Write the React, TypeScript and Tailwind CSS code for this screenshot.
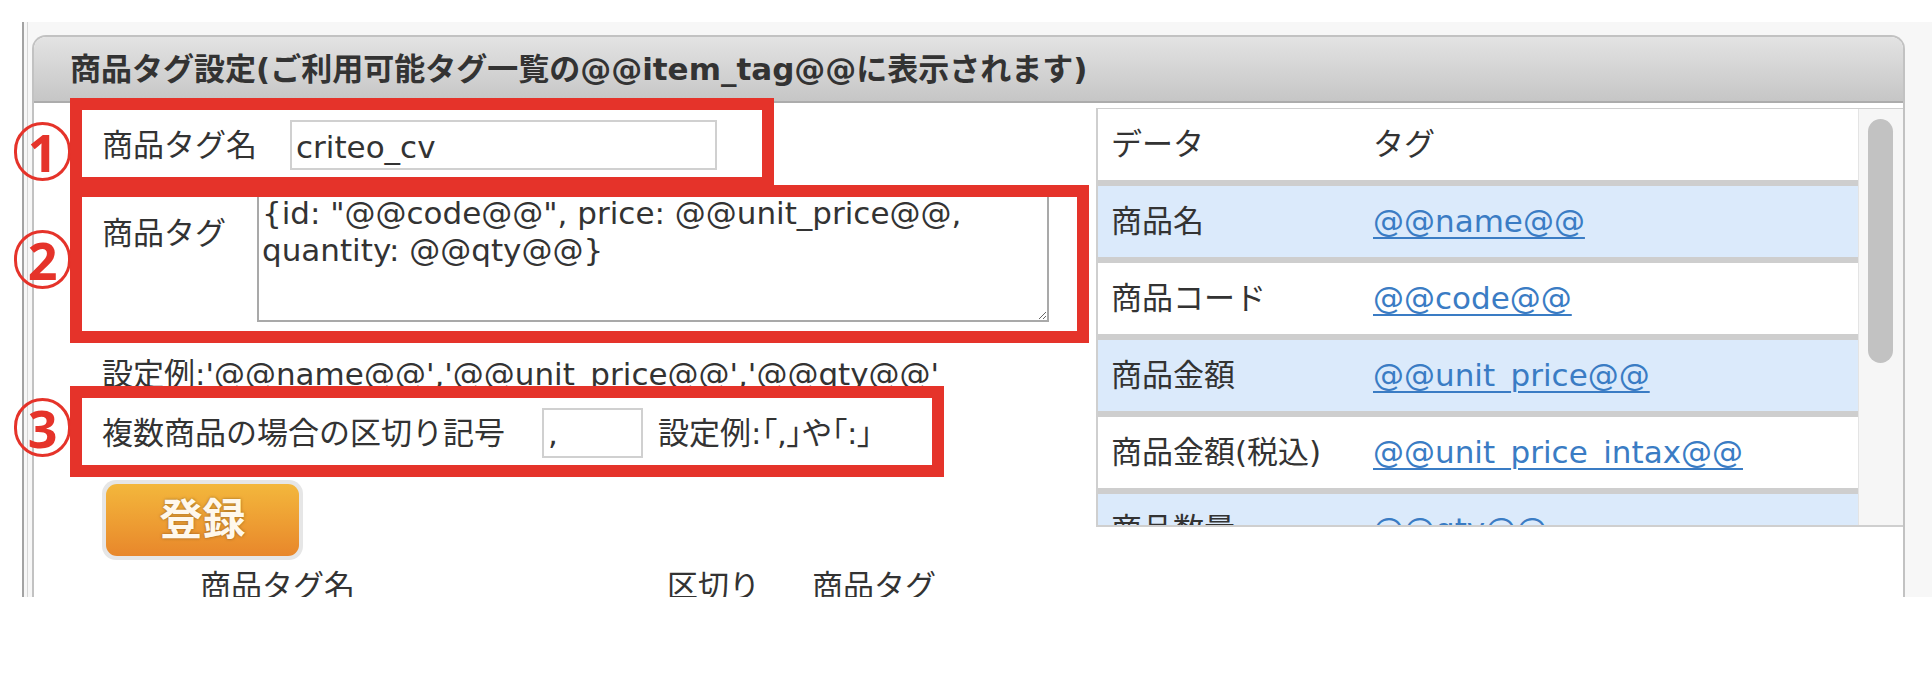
import React from "react";

const tagRows = [
  { label: "商品名", tag: "@@name@@" },
  { label: "商品コード", tag: "@@code@@" },
  { label: "商品金額", tag: "@@unit_price@@" },
  { label: "商品金額(税込)", tag: "@@unit_price_intax@@" },
  { label: "商品数量", tag: "@@qty@@" },
];

function Circled({ n, className }: { n: string; className: string }) {
  return (
    <div
      className={
        "absolute left-[14px] w-[57px] h-[59px] rounded-full border-[3px] border-[#e5332a] flex items-center justify-center text-[#e5332a] font-bold text-[52px] leading-none font-['Noto_Sans',sans-serif] " +
        className
      }
    >
      {n}
    </div>
  );
}

export default function App() {
  return (
    <div className="relative w-[1932px] h-[686px] overflow-hidden bg-white text-[#333] text-[31px] font-['DejaVu_Sans','Noto_Sans_CJK_JP',sans-serif]">
      <div className="pt-[22px] pl-[22px]">
        <div className="h-[575px] overflow-hidden bg-[#f7f7f7] border-l-2 border-[#a3a3a3]">
          <div className="h-full ml-[3px] border-l border-[#d6d6d6] pl-[4px] pt-[13px]">
            {/* panel */}
            <div className="w-[1873px] rounded-t-[14px] border-x-2 border-t-2 border-[#c2c2c2] bg-white">
              <div className="h-[66px] rounded-t-[12px] border-b-2 border-[#acacac] bg-gradient-to-b from-[#e3e3e3] to-[#c6c6c6] flex items-center pl-[36px] font-bold text-[31px] text-[#333]">
                商品タグ設定(ご利用可能タグ一覧の@@item_tag@@に表示されます)
              </div>

              <div className="flex">
                {/* form column */}
                <div className="w-[1062px] pl-[68px] pt-[17px] leading-[40px]">
                  <div className="flex items-center h-[50px]">
                    <div className="w-[188px]">商品タグ名</div>
                    <input
                      readOnly
                      value="criteo_cv"
                      className="w-[427px] h-[50px] border-2 border-[#d0d0d0] bg-white px-[4px] pt-[3px] text-[31px] outline-none"
                    />
                  </div>

                  <div className="flex items-start mt-[18px]">
                    <div className="w-[155px] pt-[25px]">商品タグ</div>
                    <textarea
                      readOnly
                      value={'{id: "@@code@@", price: @@unit_price@@,\nquantity: @@qty@@}'}
                      className="w-[792px] h-[134px] border-2 border-[#a9a9a9] bg-white px-[3px] pt-[5px] text-[31px] leading-[37px] outline-none"
                    />
                  </div>

                  <div className="mt-[32px] h-[40px] whitespace-nowrap">
                    設定例:'@@name@@','@@unit_price@@','@@qty@@'
                  </div>

                  <div className="flex items-center h-[50px] mt-[14px] whitespace-nowrap">
                    <div className="w-[440px]">複数商品の場合の区切り記号</div>
                    <input
                      readOnly
                      value=","
                      className="w-[101px] h-[50px] border-2 border-[#d0d0d0] bg-white px-[4px] text-[31px] outline-none"
                    />
                    <div className="ml-[15px] [font-feature-settings:'palt']">設定例:「,」や「:」</div>
                  </div>

                  <div className="mt-[22px] w-[201px] h-[80px] rounded-[14px] bg-[#e6e6e6] p-[4px]">
                    <button className="w-full h-full rounded-[11px] bg-gradient-to-b from-[#f3b73c] to-[#e8872b] text-[#fff8ec] text-[43px] font-bold leading-none [text-shadow:0_0_3px_rgba(90,60,20,0.6)]">
                      登録
                    </button>
                  </div>

                  <div className="mt-[6px] flex whitespace-nowrap">
                    <div className="w-[565px] pl-[98px]">商品タグ名</div>
                    <div className="w-[145px]">区切り</div>
                    <div>商品タグ</div>
                  </div>
                </div>

                {/* available tags list */}
                <div className="mt-[5px] w-[807px] h-[419px] border-l-2 border-b-2 border-t border-[#cfcfcf] flex overflow-hidden">
                  <div className="w-[760px]">
                    <div className="grid grid-cols-[262px_1fr] h-[77px] items-center border-b-[6px] border-[#cecece] bg-white">
                      <div className="pl-[13px]">データ</div>
                      <div className="pl-[13px]">タグ</div>
                    </div>
                    {tagRows.map((r, i) => (
                      <div
                        key={r.tag}
                        className={
                          "grid grid-cols-[262px_1fr] h-[77px] items-center border-b-[6px] border-[#cecece] " +
                          (i % 2 === 0 ? "bg-[#dbeafb]" : "bg-white")
                        }
                      >
                        <div className="pl-[13px] whitespace-nowrap">{r.label}</div>
                        <div className="pl-[13px]">
                          <a className="text-[#3a7cc4] underline decoration-2 underline-offset-[5px]">
                            {r.tag}
                          </a>
                        </div>
                      </div>
                    ))}
                  </div>
                  <div className="w-[45px] border-l border-[#e4e4e4] bg-[#f6f6f6] pl-[9px] pt-[10px]">
                    <div className="w-[25px] h-[244px] rounded-full bg-[#c2c2c2]" />
                  </div>
                </div>
              </div>
            </div>
          </div>
        </div>
      </div>

      {/* annotations */}
      <div className="absolute left-[70px] top-[98px] w-[704px] h-[91px] border-[12px] border-[#e5332a]" />
      <div className="absolute left-[70px] top-[185px] w-[1019px] h-[158px] border-[12px] border-[#e5332a]" />
      <div className="absolute left-[70px] top-[386px] w-[874px] h-[91px] border-[12px] border-[#e5332a]" />
      <Circled n="1" className="top-[122px]" />
      <Circled n="2" className="top-[230px]" />
      <Circled n="3" className="top-[398px]" />
    </div>
  );
}
